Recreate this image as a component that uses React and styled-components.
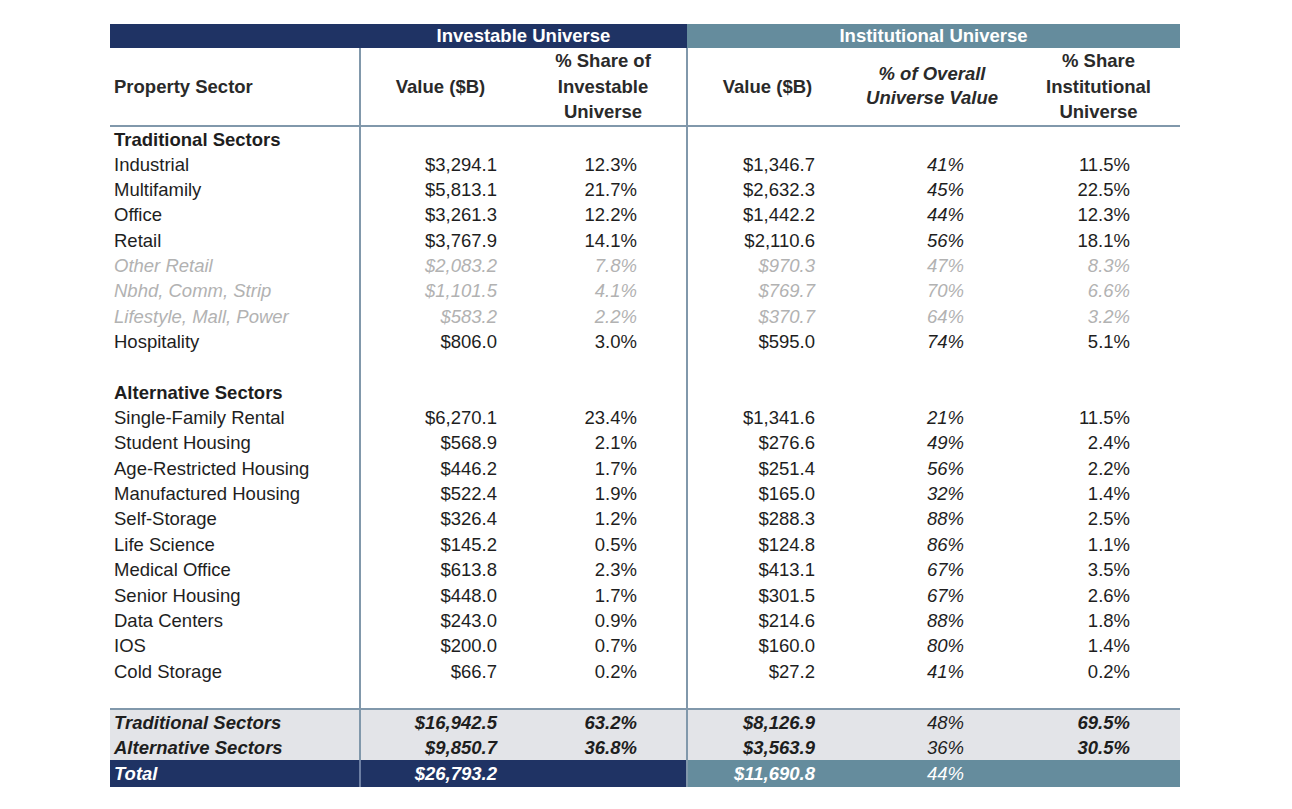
import React from 'react';
import styled, { createGlobalStyle, css } from 'styled-components';

const GlobalStyle = createGlobalStyle`
  html, body {
    margin: 0;
    padding: 0;
    background: #ffffff;
  }
`;

const NAVY = '#1f3364';
const TEAL = '#658c9d';
const LINE = '#8198ab';
const BAND = '#e3e4e8';
const MUTED = '#b2b2b2';

// widths and right padding of the six columns
const columns = [
    { w: 250, pr: 0 },
    { w: 160, pr: 23 },
    { w: 167, pr: 49 },
    { w: 160, pr: 32 },
    { w: 170, pr: 53 },
    { w: 163, pr: 50 },
];

const Page = styled.div`
    padding: 24px 0 0 110px;
`;

const Sheet = styled.table`
    border-collapse: collapse;
    table-layout: fixed;
    width: 1070px;
    font-family: "Liberation Sans", Arial, sans-serif;
    font-size: 18.5px;
    color: #1e1e1e;
`;

const BandRow = styled.tr`
    height: 24px;
`;

const BandCell = styled.th`
    padding: 0;
    background: ${(p) => (p.$teal ? TEAL : NAVY)};
    color: #ffffff;
    font-weight: 700;
    font-size: 18.5px;
    line-height: 24px;
    text-align: center;
`;

const HeadRow = styled.tr`
    height: 77px;
`;

const HeadCell = styled.th`
    padding: 0 ${(p) => (p.$left ? '0 0 4px' : '0')};
    padding-left: ${(p) => (p.$left ? '4px' : '0')};
    font-weight: 700;
    font-style: ${(p) => (p.$italic ? 'italic' : 'normal')};
    line-height: ${(p) => (p.$italic ? '24px' : '25.5px')};
    text-align: ${(p) => (p.$left ? 'left' : 'center')};
    color: #2a2a2a;
    vertical-align: middle;
    border-bottom: 2px solid ${LINE};
    border-right: ${(p) => (p.$divider ? `2px solid ${LINE}` : 'none')};
`;

const Row = styled.tr`
    height: 25.35px;
    background: ${(p) => (p.$band ? BAND : 'transparent')};
    ${(p) => p.$first && css`
        border-top: 2px solid ${LINE};
    `}
`;

const Cell = styled.td`
    padding: 0 ${(p) => p.$pr}px 0 ${(p) => (p.$label ? 4 : 0)}px;
    line-height: 25px;
    white-space: nowrap;
    text-align: ${(p) => (p.$label ? 'left' : 'right')};
    font-weight: ${(p) => (p.$bold ? 700 : 400)};
    font-style: ${(p) => (p.$italic ? 'italic' : 'normal')};
    color: ${(p) => (p.$muted ? MUTED : p.$light ? '#ffffff' : '#1e1e1e')};
    background: ${(p) => p.$bg || 'transparent'};
    border-right: ${(p) => (p.$divider ? `2px solid ${p.$dividerColor || LINE}` : 'none')};
`;

const TotalRow = styled.tr`
    height: 27px;
`;

const traditional = [
    ['Industrial', '$3,294.1', '12.3%', '$1,346.7', '41%', '11.5%'],
    ['Multifamily', '$5,813.1', '21.7%', '$2,632.3', '45%', '22.5%'],
    ['Office', '$3,261.3', '12.2%', '$1,442.2', '44%', '12.3%'],
    ['Retail', '$3,767.9', '14.1%', '$2,110.6', '56%', '18.1%'],
    ['Other Retail', '$2,083.2', '7.8%', '$970.3', '47%', '8.3%', true],
    ['Nbhd, Comm, Strip', '$1,101.5', '4.1%', '$769.7', '70%', '6.6%', true],
    ['Lifestyle, Mall, Power', '$583.2', '2.2%', '$370.7', '64%', '3.2%', true],
    ['Hospitality', '$806.0', '3.0%', '$595.0', '74%', '5.1%'],
];

const alternative = [
    ['Single-Family Rental', '$6,270.1', '23.4%', '$1,341.6', '21%', '11.5%'],
    ['Student Housing', '$568.9', '2.1%', '$276.6', '49%', '2.4%'],
    ['Age-Restricted Housing', '$446.2', '1.7%', '$251.4', '56%', '2.2%'],
    ['Manufactured Housing', '$522.4', '1.9%', '$165.0', '32%', '1.4%'],
    ['Self-Storage', '$326.4', '1.2%', '$288.3', '88%', '2.5%'],
    ['Life Science', '$145.2', '0.5%', '$124.8', '86%', '1.1%'],
    ['Medical Office', '$613.8', '2.3%', '$413.1', '67%', '3.5%'],
    ['Senior Housing', '$448.0', '1.7%', '$301.5', '67%', '2.6%'],
    ['Data Centers', '$243.0', '0.9%', '$214.6', '88%', '1.8%'],
    ['IOS', '$200.0', '0.7%', '$160.0', '80%', '1.4%'],
    ['Cold Storage', '$66.7', '0.2%', '$27.2', '41%', '0.2%'],
];

const summary = [
    ['Traditional Sectors', '$16,942.5', '63.2%', '$8,126.9', '48%', '69.5%'],
    ['Alternative Sectors', '$9,850.7', '36.8%', '$3,563.9', '36%', '30.5%'],
];

const DataRow = ({ values }) => {
    const muted = values[6];
    return (
        <Row>
            {values.slice(0, 6).map((v, i) => (
                <Cell
                    key={i}
                    $label={i === 0}
                    $pr={columns[i].pr}
                    $italic={muted || i === 4}
                    $muted={muted}
                    $divider={i === 0 || i === 2}
                >
                    {v}
                </Cell>
            ))}
        </Row>
    );
};

const SectionRow = ({ title }) => (
    <Row>
        <Cell $label $bold $pr={0} $divider>{title}</Cell>
        <Cell $pr={0} />
        <Cell $pr={0} $divider />
        <Cell $pr={0} />
        <Cell $pr={0} />
        <Cell $pr={0} />
    </Row>
);

const BlankRow = () => (
    <Row>
        <Cell $pr={0} $divider />
        <Cell $pr={0} />
        <Cell $pr={0} $divider />
        <Cell $pr={0} />
        <Cell $pr={0} />
        <Cell $pr={0} />
    </Row>
);

const App = () => {
    return (
        <Page>
            <GlobalStyle />
            <Sheet>
                <colgroup>
                    {columns.map((c, i) => <col key={i} style={{ width: c.w }} />)}
                </colgroup>
                <thead>
                    <BandRow>
                        <BandCell />
                        <BandCell colSpan={2}>Investable Universe</BandCell>
                        <BandCell colSpan={3} $teal>Institutional Universe</BandCell>
                    </BandRow>
                    <HeadRow>
                        <HeadCell $left $divider>Property Sector</HeadCell>
                        <HeadCell>Value ($B)</HeadCell>
                        <HeadCell $divider>% Share of<br />Investable<br />Universe</HeadCell>
                        <HeadCell>Value ($B)</HeadCell>
                        <HeadCell $italic>% of Overall<br />Universe Value</HeadCell>
                        <HeadCell>% Share<br />Institutional<br />Universe</HeadCell>
                    </HeadRow>
                </thead>
                <tbody>
                    <SectionRow title="Traditional Sectors" />
                    {traditional.map((r) => <DataRow key={r[0]} values={r} />)}
                    <BlankRow />
                    <SectionRow title="Alternative Sectors" />
                    {alternative.map((r) => <DataRow key={r[0]} values={r} />)}
                    <BlankRow />
                    {summary.map((r, n) => (
                        <Row key={r[0]} $band $first={n === 0}>
                            {r.map((v, i) => (
                                <Cell
                                    key={i}
                                    $label={i === 0}
                                    $pr={columns[i].pr}
                                    $italic
                                    $bold={i !== 4}
                                    $divider={i === 0 || i === 2}
                                >
                                    {v}
                                </Cell>
                            ))}
                        </Row>
                    ))}
                    <TotalRow>
                        <Cell $label $bold $italic $light $pr={0} $bg={NAVY} $divider $dividerColor="#6d7fa3">Total</Cell>
                        <Cell $bold $italic $light $pr={columns[1].pr} $bg={NAVY}>$26,793.2</Cell>
                        <Cell $pr={0} $bg={NAVY} $divider />
                        <Cell $bold $italic $light $pr={columns[3].pr} $bg={TEAL}>$11,690.8</Cell>
                        <Cell $italic $light $pr={columns[4].pr} $bg={TEAL}>44%</Cell>
                        <Cell $pr={0} $bg={TEAL} />
                    </TotalRow>
                </tbody>
            </Sheet>
        </Page>
    );
};

export default App;
